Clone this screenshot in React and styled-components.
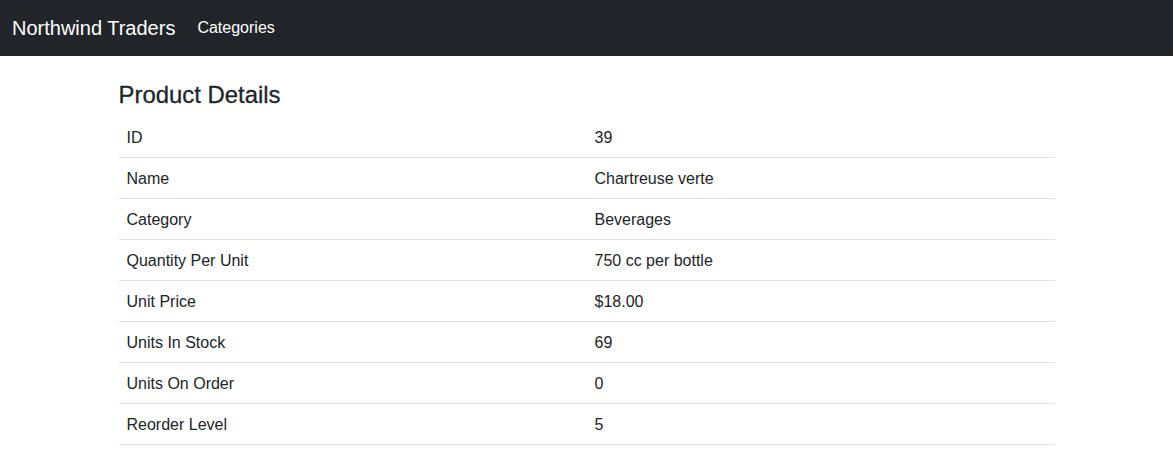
import React from 'react'
import styled, { createGlobalStyle } from 'styled-components'

const GlobalStyle = createGlobalStyle`
  body {
    margin: 0;
    font-family: "Liberation Sans", Arial, sans-serif;
    font-size: 16px;
    line-height: 1.5;
    color: #212529;
    background: #ffffff;
  }
`;

//styled components
const Navbar = styled.nav`
  display: flex;
  align-items: center;
  height: 56px;
  padding: 0 12px;
  background-color: #212529;
  box-sizing: border-box;
`;
const Brand = styled.a`
  font-size: 20px;
  line-height: 30px;
  color: #ffffff;
  text-decoration: none;
  margin-right: 14px;
`;
const NavLink = styled.a`
  font-size: 16px;
  color: #ffffff;
  text-decoration: none;
  padding: 8px;
`;
const Container = styled.main`
  max-width: 936px;
  margin: 25px auto 0;
  padding: 0 12px;
`;
const H4 = styled.h4`
  font-size: 23.9px;
  font-weight: 500;
  line-height: 1.2;
  margin: 0 0 7px;
  -webkit-text-stroke: 0.3px #212529;
`;
const Table = styled.div`
  display: grid;
  grid-template-columns: 1fr 1fr;
`;
const Cell = styled.div`
  padding: 9px 8px 7px;
  border-bottom: 1px solid #dee2e6;
`;

const rows = [
  ['ID', '39'],
  ['Name', 'Chartreuse verte'],
  ['Category', 'Beverages'],
  ['Quantity Per Unit', '750 cc per bottle'],
  ['Unit Price', '$18.00'],
  ['Units In Stock', '69'],
  ['Units On Order', '0'],
  ['Reorder Level', '5'],
];

const App = () => {
  return (
    <div>
      <GlobalStyle />
      <Navbar>
        <Brand href="#">Northwind Traders</Brand>
        <NavLink href="#">Categories</NavLink>
      </Navbar>
      <Container>
        <H4>Product Details</H4>
        <Table>
          {rows.map(([label, value]) => (
            <React.Fragment key={label}>
              <Cell>{label}</Cell>
              <Cell>{value}</Cell>
            </React.Fragment>
          ))}
        </Table>
      </Container>
    </div>
  )
}

export default App
